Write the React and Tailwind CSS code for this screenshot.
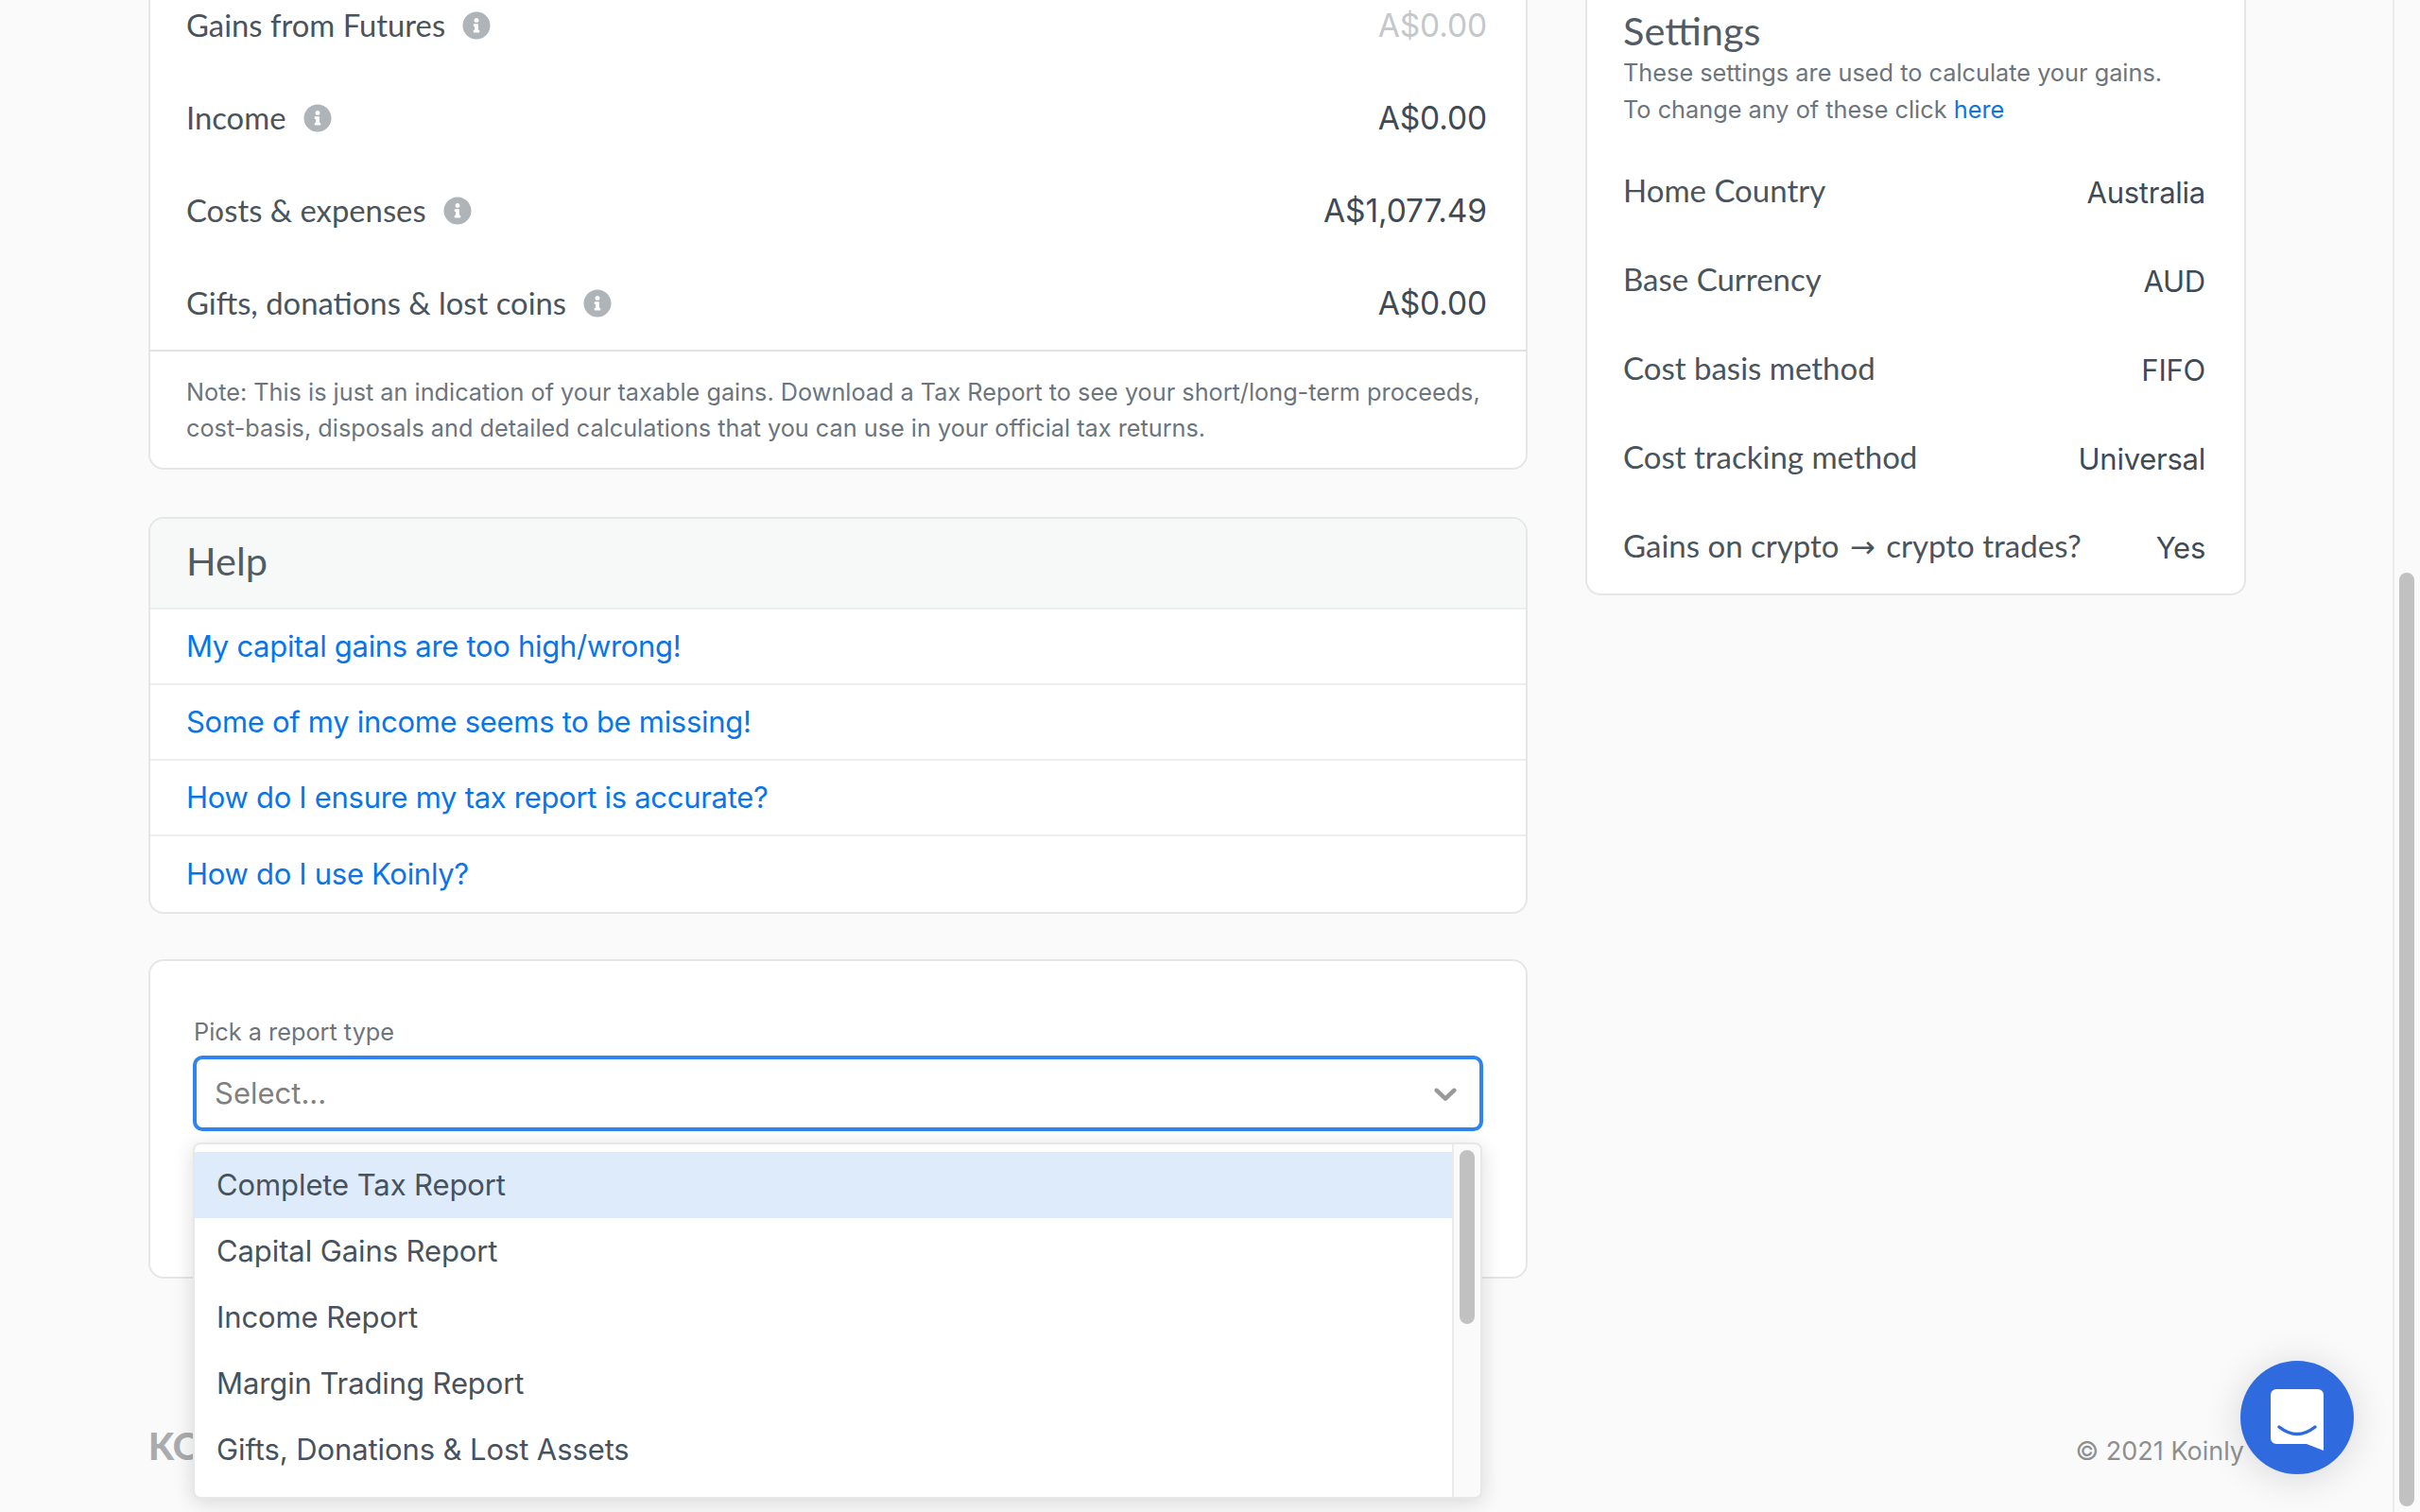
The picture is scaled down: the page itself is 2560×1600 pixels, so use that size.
import React from 'react';
import { FaInfoCircle } from 'react-icons/fa';

const gainRows = [
  { label: 'Gains from Futures', value: 'A$0.00', muted: true },
  { label: 'Income', value: 'A$0.00' },
  { label: 'Costs & expenses', value: 'A$1,077.49' },
  { label: 'Gifts, donations & lost coins', value: 'A$0.00' },
];

const helpLinks = [
  'My capital gains are too high/wrong!',
  'Some of my income seems to be missing!',
  'How do I ensure my tax report is accurate?',
  'How do I use Koinly?',
];

const settingsRows = [
  { label: 'Home Country', value: 'Australia' },
  { label: 'Base Currency', value: 'AUD' },
  { label: 'Cost basis method', value: 'FIFO' },
  { label: 'Cost tracking method', value: 'Universal' },
  {
    label: (
      <>
        Gains on crypto <span className="mx-[3px] font-['DejaVu_Sans',sans-serif] text-[32px] leading-none">→</span> crypto trades?
      </>
    ),
    value: 'Yes',
  },
];

const reportTypes = [
  'Complete Tax Report',
  'Capital Gains Report',
  'Income Report',
  'Margin Trading Report',
  'Gifts, Donations & Lost Assets',
];

const ChatIcon = () => (
  <svg width="56" height="65" viewBox="0 0 56 65">
    <path d="M6 0H50a6 6 0 0 1 6 6V65L38 58H6a6 6 0 0 1-6-6V6a6 6 0 0 1 6-6Z" fill="#fff" />
    <path d="M9 40Q28 55 47 40" fill="none" stroke="#2f6bdf" strokeWidth="3.5" strokeLinecap="round" />
  </svg>
);

const App = () => {
  return (
    <div className="h-screen overflow-hidden flex bg-[#fafafa] text-[#47525d] font-['Inter',sans-serif]">
      <div className="flex-1 pl-[157px] -mt-[22px]">
        <div className="flex gap-[61px] items-start">
          {/* Left column */}
          <div className="w-[1459px] shrink-0">
            <div className="bg-white border-2 border-t-0 border-[#e4e6e7] rounded-b-2xl">
              {gainRows.map((row) => (
                <div key={row.label} className="h-[98px] pl-[38px] pr-[41px] flex items-center justify-between">
                  <div className="flex items-center gap-[18px]">
                    <span className="font-['Lato',sans-serif] text-[32.8px] text-[#4a545c]">{row.label}</span>
                    <FaInfoCircle className="w-[30px] h-[30px] text-[#aeb4b8]" />
                  </div>
                  <span className={`pt-[1px] text-[33.5px] tracking-[-0.1px] ${row.muted ? 'text-[#c4c8cb]' : 'text-[#3f4a54]'}`}>{row.value}</span>
                </div>
              ))}
              <div className="border-t-2 border-[#dfe1e3] pl-[38px] pr-[38px] pt-[25px] pb-[23px] text-[25.25px] leading-[37.5px] text-[#6c757d]">
                Note: This is just an indication of your taxable gains. Download a Tax Report to see your short/long-term proceeds, cost-basis, disposals and detailed calculations that you can use in your official tax returns.
              </div>
            </div>

            {/* Help */}
            <div className="mt-[50px] bg-white border-2 border-[#e4e6e7] rounded-2xl overflow-hidden">
              <div className="h-[94px] pl-[38px] pb-[6px] flex items-center bg-[#f7f8f8] font-['Lato',sans-serif] text-[41.5px] text-[#525c64]">Help</div>
              {helpLinks.map((link, i) => (
                <div key={link} className={`pl-[38px] flex items-center border-t-2 border-[#eceef0] text-[31px] tracking-[-0.3px] text-[#0a75e6] ${i === 3 ? 'h-[82px]' : 'h-[80px]'}`}>
                  {link}
                </div>
              ))}
            </div>

            {/* Report picker */}
            <div className="mt-[48px] h-[338px] bg-white border-2 border-[#e4e6e7] rounded-2xl pt-[57px] pl-[45px] pr-[45px]">
              <div className="ml-[1px] text-[25.3px] leading-[36px] text-[#6c757d] mb-[7px]">Pick a report type</div>
              <div className="relative">
                <div className="h-[80px] border-[4px] border-[#2f84ee] rounded-[10px] pl-[19px] pr-[16px] flex items-center justify-between bg-white">
                  <span className="text-[31px] text-[#808080]">Select...</span>
                  <svg width="40" height="40" viewBox="0 0 20 20" fill="#999">
                    <path d="M4.516 7.548c0.436-0.446 1.043-0.481 1.576 0l3.908 3.747 3.908-3.747c0.533-0.481 1.141-0.446 1.574 0 0.436 0.445 0.408 1.197 0 1.615-0.406 0.418-4.695 4.502-4.695 4.502-0.217 0.223-0.502 0.335-0.787 0.335s-0.57-0.112-0.789-0.335c0 0-4.287-4.084-4.695-4.502s-0.436-1.17 0-1.615z" />
                  </svg>
                </div>
                {/* Open dropdown */}
                <div className="absolute z-10 left-0 right-[1px] top-[92px] h-[377px] flex bg-white border-2 border-[#e6e7e8] rounded-lg overflow-hidden shadow-[0_4px_22px_rgba(0,0,0,0.14)]">
                  <div className="flex-1 pt-[8px]">
                    {reportTypes.map((type, i) => (
                      <div key={type} className={`h-[70px] pl-[23px] flex items-center text-[31px] tracking-[-0.1px] text-[#47525d] ${i === 0 ? 'bg-[#deebfb]' : ''}`}>
                        {type}
                      </div>
                    ))}
                  </div>
                  <div className="w-[30px] bg-[#fafafa] border-l-2 border-[#ebebeb] pt-[6px] pl-[6px]">
                    <div className="w-[16px] h-[184px] rounded-lg bg-[#c1c1c1]" />
                  </div>
                </div>
              </div>
            </div>
          </div>

          {/* Settings */}
          <div className="w-[699px] shrink-0 bg-white border-2 border-t-0 border-[#e4e6e7] rounded-b-2xl pl-[38px] pr-[41px] pt-[30px] pb-[3px]">
            <div className="font-['Lato',sans-serif] text-[41.5px] leading-[48px] text-[#525c64]">Settings</div>
            <div className="mt-[1px] text-[25.3px] leading-[39px] text-[#6c757d]">
              <p>These settings are used to calculate your gains.</p>
              <p>To change any of these click <span className="text-[#0a75e6]">here</span></p>
            </div>
            <div className="mt-[20px]">
              {settingsRows.map((row) => (
                <div key={row.value} className="h-[94px] flex items-center justify-between">
                  <span className="font-['Lato',sans-serif] text-[33px] text-[#4a545c]">{row.label}</span>
                  <span className="pt-[5px] text-[31px] tracking-[-0.25px] text-[#3f4a54]">{row.value}</span>
                </div>
              ))}
            </div>
          </div>
        </div>

        {/* Footer */}
        <div className="w-[2217px] mt-[148px] flex items-center justify-between">
          <span className="pb-[12px] font-['Lato',sans-serif] font-black text-[39px] text-[#a9acae]">KOINLY</span>
          <span className="text-[27px] text-[#8f8f8f]">© 2021 Koinly</span>
        </div>
      </div>

      {/* Page scrollbar */}
      <div className="w-[29px] shrink-0 bg-[#fafafa] border-l-2 border-[#ebebeb] pl-[5px] pt-[606px]">
        <div className="w-[16px] h-[988px] rounded-lg bg-[#c1c1c1]" />
      </div>

      {/* Chat launcher */}
      <div className="fixed left-[2370px] top-[1440px] w-[120px] h-[120px] rounded-full bg-[#2f6bdf] flex items-center justify-center pt-[5px] shadow-[0_4px_40px_rgba(0,0,0,0.14)]">
        <ChatIcon />
      </div>
    </div>
  );
};

export default App;
